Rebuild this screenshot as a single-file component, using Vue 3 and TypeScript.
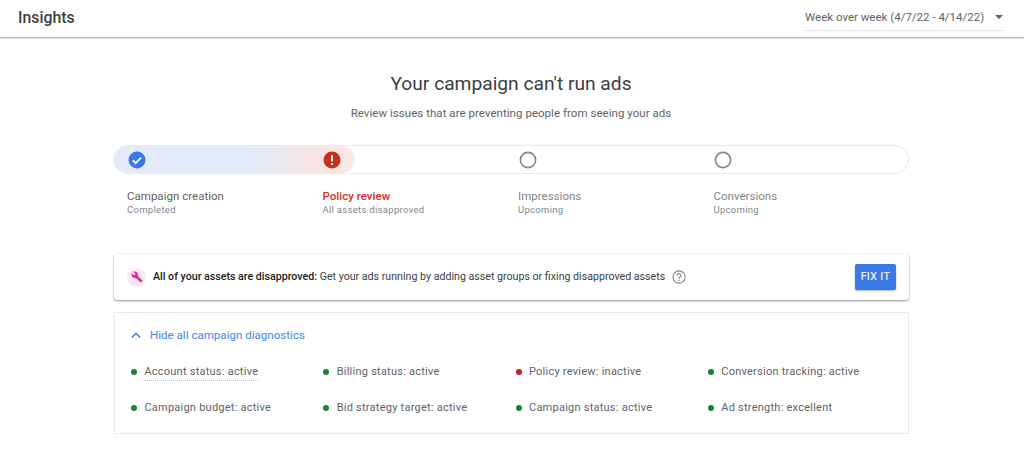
<script setup lang="ts">
interface Step { title: string; sub: string; state: 'done' | 'error' | 'todo' }
const steps: Step[] = [
  { title: 'Campaign creation', sub: 'Completed', state: 'done' },
  { title: 'Policy review', sub: 'All assets disapproved', state: 'error' },
  { title: 'Impressions', sub: 'Upcoming', state: 'todo' },
  { title: 'Conversions', sub: 'Upcoming', state: 'todo' },
]
interface Diag { text: string; ok: boolean; dotted?: boolean }
const diagnostics: Diag[] = [
  { text: 'Account status: active', ok: true, dotted: true },
  { text: 'Billing status: active', ok: true },
  { text: 'Policy review: inactive', ok: false },
  { text: 'Conversion tracking: active', ok: true },
  { text: 'Campaign budget: active', ok: true },
  { text: 'Bid strategy target: active', ok: true },
  { text: 'Campaign status: active', ok: true },
  { text: 'Ad strength: excellent', ok: true },
]
</script>

<template>
  <div class="page">
    <header class="topbar">
      <h1 class="insights">Insights</h1>
      <div class="range">
        <span>Week over week (4/7/22 - 4/14/22)</span>
        <i class="caret"></i>
      </div>
    </header>

    <main class="content">
      <h2 class="headline">Your campaign can't run ads</h2>
      <p class="subline">Review issues that are preventing people from seeing your ads</p>

      <div class="track">
        <div class="fill"></div>
        <div v-for="s in steps" :key="s.title" class="track-cell">
          <svg v-if="s.state === 'done'" class="ico" viewBox="0 0 18 18">
            <circle cx="9" cy="9" r="8.5" fill="#3b78e7" />
            <path d="M4.9 9.3l2.8 2.8 5.4-5.6" fill="none" stroke="#fff" stroke-width="1.8" />
          </svg>
          <svg v-else-if="s.state === 'error'" class="ico" viewBox="0 0 18 18">
            <circle cx="9" cy="9" r="8.5" fill="#c5301f" />
            <rect x="8" y="4" width="2" height="6.4" rx=".6" fill="#fff" />
            <rect x="8" y="12" width="2" height="2" rx=".6" fill="#fff" />
          </svg>
          <svg v-else class="ico" viewBox="0 0 18 18">
            <circle cx="9" cy="9" r="7.6" fill="none" stroke="#80868b" stroke-width="1.6" />
          </svg>
        </div>
      </div>

      <div class="labels">
        <div v-for="s in steps" :key="s.title" class="label" :class="s.state">
          <div class="label-title">{{ s.title }}</div>
          <div class="label-sub">{{ s.sub }}</div>
        </div>
      </div>

      <section class="alert">
        <span class="wrench">
          <svg viewBox="0 0 24 24" width="14" height="14">
            <path fill="#e52592" d="M22.7 19l-9.1-9.1c.9-2.3.4-5-1.5-6.9-2-2-5-2.4-7.4-1.3L9 6 6 9 1.600 4.700C.4 7.100.9 10.100 2.900 12.100c1.900 1.900 4.600 2.400 6.900 1.500l9.100 9.100c.4.400 1 .4 1.400 0l2.300-2.300c.5-.4.500-1.100.1-1.400z" />
          </svg>
        </span>
        <p class="alert-text"><b>All of your assets are disapproved:</b> Get your ads running by adding asset groups or fixing disapproved assets</p>
        <svg class="help" viewBox="0 0 24 24" width="14" height="14">
          <circle cx="12" cy="12" r="10.500" fill="none" stroke="#80868b" stroke-width="1.800" />
          <path d="M8.600 9.400a3.400 3.400 0 1 1 5.400 2.700c-1.200.9-2 1.500-2 3" fill="none" stroke="#80868b" stroke-width="1.900" />
          <rect x="11" y="16.500" width="2" height="2" fill="#80868b" />
        </svg>
        <button class="fix">FIX IT</button>
      </section>

      <section class="diag">
        <div class="diag-head">
          <svg viewBox="0 0 12 8" width="10" height="7">
            <path d="M1 6.500l5-5 5 5" fill="none" stroke="#3b78e7" stroke-width="1.700" />
          </svg>
          <span>Hide all campaign diagnostics</span>
        </div>
        <div class="diag-grid">
          <div v-for="d in diagnostics" :key="d.text" class="diag-item">
            <i class="dot" :class="{ bad: !d.ok }"></i>
            <span :class="{ dotted: d.dotted }">{{ d.text }}</span>
          </div>
        </div>
      </section>
    </main>
  </div>
</template>

<style scoped>
.page {
  width: 1024px;
  height: 468px;
  overflow: hidden;
  background: #fff;
  font-family: Roboto, "Liberation Sans", sans-serif;
  color: #5f6368;
}
.topbar {
  height: 38px;
  box-sizing: border-box;
  padding: 0 20px 0 18px;
  display: flex;
  justify-content: space-between;
  align-items: flex-start;
  border-bottom: 1px solid #bdbdbd;
  box-shadow: 0 1px 1px rgba(0, 0, 0, .12);
}
.insights {
  margin: 7px 0 0;
  font-size: 15.8px;
  line-height: 22px;
  font-weight: 500;
  color: #3c4043;
}
.range {
  width: 200px;
  height: 31px;
  box-sizing: border-box;
  padding: 9px 0 0 1px;
  display: flex;
  justify-content: space-between;
  font-size: 11.500px;
  line-height: 16px;
  color: #5f6368;
  border-bottom: 1px solid #e8eaed;
}
.caret {
  width: 0;
  height: 0;
  margin: 6px 1px 0 0;
  border-left: 4px solid transparent;
  border-right: 4px solid transparent;
  border-top: 4px solid #5f6368;
}
.content {
  width: 796px;
  margin: 0 auto;
  transform: translateX(-1px);
  display: flex;
  flex-direction: column;
}
.headline {
  margin: 34px 0 0;
  text-align: center;
  font-size: 19.200px;
  line-height: 24px;
  font-weight: 400;
  color: #3c4043;
}
.subline {
  margin: 8px 0 0;
  text-align: center;
  font-size: 11.500px;
  line-height: 18px;
  letter-spacing: .04px;
  color: #5f6368;
}
.track {
  position: relative;
  margin-top: 23px;
  height: 29px;
  box-sizing: border-box;
  display: grid;
  grid-template-columns: repeat(4, 195.500px);
  padding-left: 13.500px;
  align-items: center;
  border: 1px solid #e8eaed;
  border-radius: 15px;
  overflow: hidden;
}
.fill {
  position: absolute;
  left: 0;
  top: 0;
  bottom: 0;
  width: 241px;
  border-radius: 0 15px 15px 0;
  background: linear-gradient(90deg, #e4ecfb 0%, #e4ecfb 58%, #fbe4e2 88%, #fce8e6 100%);
}
.ico {
  position: relative;
  width: 18px;
  height: 18px;
  display: block;
}
.labels {
  margin-top: 15px;
  display: grid;
  grid-template-columns: repeat(4, 195.500px);
  padding-left: 14px;
}
.label-title {
  font-size: 11.500px;
  line-height: 14px;
  letter-spacing: .02px;
  color: #5f6368;
}
.label-sub {
  margin-top: 0;
  font-size: 9.500px;
  line-height: 14px;
  letter-spacing: .3px;
  color: #80868b;
}
.label.error .label-title {
  color: #d93025;
  font-weight: 500;
}
.label.todo .label-title {
  color: #80868b;
}
.alert {
  margin-top: 37px;
  margin-left: 1px;
  height: 46px;
  box-sizing: border-box;
  padding: 0 13px;
  display: flex;
  align-items: center;
  border-radius: 3px;
  box-shadow: 0 1px 2px rgba(60, 64, 67, .55), 0 0 2px rgba(60, 64, 67, .12);
}
.wrench {
  width: 19px;
  height: 19px;
  margin-right: 7px;
  border-radius: 50%;
  background: #fde7f3;
  display: flex;
  align-items: center;
  justify-content: center;
}
.wrench svg {
  width: 12px;
  height: 12px;
}
.alert-text {
  margin: 0;
  font-size: 10.650px;
  line-height: 14px;
  color: #3c4043;
}
.alert-text b {
  font-weight: 500;
  color: #202124;
}
.help {
  margin-left: 7px;
  margin-right: auto;
}
.fix {
  width: 41px;
  height: 26px;
  padding: 0;
  border: 0;
  border-radius: 2px;
  background: #3b78e7;
  color: #e8f0fe;
  font: 500 10.500px/26px Roboto, "Liberation Sans", sans-serif;
  letter-spacing: .4px;
  box-shadow: 0 1px 2px rgba(60, 64, 67, .4);
}
.diag {
  margin-top: 12px;
  margin-left: 1px;
  height: 122px;
  box-sizing: border-box;
  border: 1px solid #e8eaed;
  padding: 14px 16px 0;
}
.diag-head {
  display: flex;
  align-items: center;
  gap: 9px;
  height: 16px;
  font-size: 11.500px;
  letter-spacing: .03px;
  color: #4285f4;
}
.diag-grid {
  margin-top: 21px;
  display: grid;
  grid-template-columns: repeat(4, 192.300px);
  grid-auto-rows: 35.500px;
}
.diag-item {
  display: flex;
  align-items: flex-start;
  gap: 7.400px;
  font-size: 11px;
  line-height: 16px;
  letter-spacing: .24px;
  color: #5f6368;
}
.dot {
  width: 6px;
  height: 6px;
  margin-top: 5px;
  border-radius: 50%;
  background: #188038;
}
.dot.bad {
  background: #c5221f;
}
.dotted {
  border-bottom: 1px dotted #bdc1c6;
}
</style>
